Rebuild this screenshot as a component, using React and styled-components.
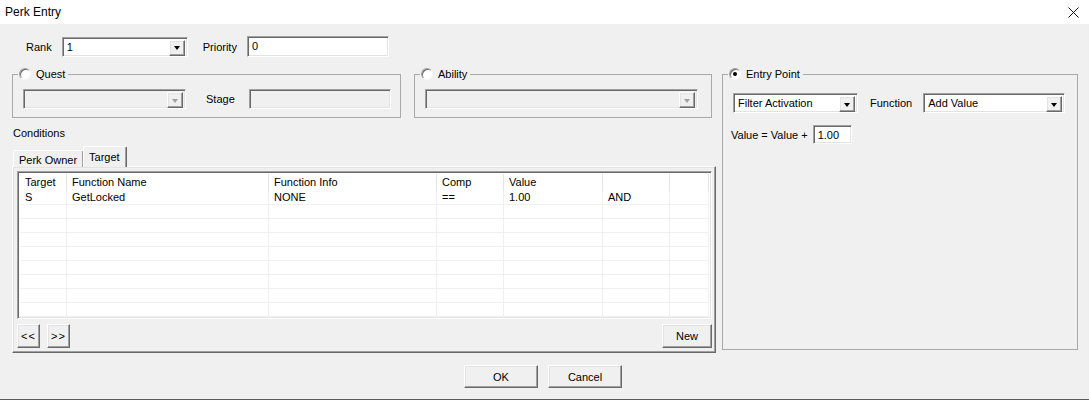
import React from "react"
import styled, { createGlobalStyle, css } from "styled-components"

const GlobalStyle = createGlobalStyle`
  html, body {
    margin: 0;
    padding: 0;
    background: #f0f0f0;
  }
  body {
    font-family: "Liberation Sans", Arial, sans-serif;
    font-size: 11px;
    color: #000;
  }
  * {
    box-sizing: border-box;
  }
`

const sunken = css`
  border: 1px solid;
  border-color: #a0a0a0 #fff #fff #a0a0a0;
  box-shadow: inset 1px 1px 0 #696969, inset -1px -1px 0 #e3e3e3;
`

const raised = css`
  border: 1px solid;
  border-color: #fff #696969 #696969 #fff;
  box-shadow: inset -1px -1px 0 #a0a0a0, inset 1px 1px 0 #e3e3e3;
`

const Window = styled.div`
  width: 1089px;
  height: 400px;
  display: flex;
  flex-direction: column;
  background: #f0f0f0;
  border-bottom: 1px solid #5a5a5a;
`

const TitleBar = styled.div`
  height: 24px;
  flex: none;
  background: #fff;
  display: flex;
  align-items: center;
  justify-content: space-between;
  padding: 0 10px 0 5px;
  font-size: 12px;
`

const Body = styled.div`
  display: grid;
  grid-template-columns: 704px 356px;
  column-gap: 6px;
  row-gap: 10px;
  padding: 12px 0 0 12px;
`

const Row = styled.div`
  display: flex;
  align-items: center;
  padding-left: ${(p) => p.$pl || 0}px;
  margin-top: ${(p) => p.$mt || 0}px;
`

const LeftCol = styled.div`
  display: flex;
  flex-direction: column;
`

const Label = styled.span`
  margin-left: ${(p) => p.$ml || 0}px;
  margin-right: ${(p) => p.$mr || 0}px;
  white-space: nowrap;
`

const Combo = styled.div`
  ${sunken};
  width: ${(p) => p.$w}px;
  height: 20px;
  display: flex;
  padding: 2px;
  background: ${(p) => (p.$disabled ? "#f0f0f0" : "#fff")};
`

const ComboText = styled.div`
  flex: 1;
  line-height: 15px;
  padding-left: 2px;
`

const ComboButton = styled.div`
  ${raised};
  width: 16px;
  height: 16px;
  background: #f0f0f0;
  display: flex;
  align-items: center;
  justify-content: center;

  &::after {
    content: "";
    border-left: 3.5px solid transparent;
    border-right: 3.5px solid transparent;
    border-top: 4px solid ${(p) => (p.$disabled ? "#a0a0a0" : "#000")};
    margin-top: 1px;
  }
`

const Edit = styled.div`
  ${sunken};
  width: ${(p) => p.$w}px;
  height: ${(p) => p.$h || 21}px;
  background: ${(p) => (p.$disabled ? "#f0f0f0" : "#fff")};
  padding: 2px 0 0 4px;
  line-height: 14px;
`

const GroupsRow = styled.div`
  display: flex;
  gap: 13px;
`

const Group = styled.fieldset`
  margin: 0;
  min-width: 0;
  width: ${(p) => p.$w}px;
  height: ${(p) => (p.$h ? `${p.$h}px` : "auto")};
  border: 1px solid #a9a9a9;
  padding: ${(p) => p.$pt || 8}px 10px 8px 10px;
  display: flex;
  flex-direction: column;
  align-items: flex-start;
`

const Legend = styled.legend`
  display: flex;
  align-items: center;
  gap: 5px;
  height: 14px;
  line-height: 14px;
  padding: 0 3px 0 1px;
  margin-left: -5px;
`

const Radio = styled.span`
  width: 12px;
  height: 12px;
  border-radius: 50%;
  border: 1px solid;
  border-color: #a0a0a0 #f8f8f8 #f8f8f8 #a0a0a0;
  box-shadow: inset 1px 1px 0 #696969;
  background: #fff;
  display: flex;
  align-items: center;
  justify-content: center;

  &::after {
    content: "";
    display: ${(p) => (p.$checked ? "block" : "none")};
    width: 4px;
    height: 4px;
    border-radius: 50%;
    background: #000;
  }
`

const Conditions = styled.div`
  margin: 9px 0 0 1px;
  line-height: 13px;
`

const TabStrip = styled.div`
  display: flex;
  align-items: flex-end;
  height: 21px;
  margin-top: 6px;
  margin-bottom: -1px;
  padding-left: 1px;
  position: relative;
  z-index: 1;
`

const Tab = styled.div`
  height: ${(p) => (p.$active ? 21 : 17)}px;
  padding: ${(p) => (p.$active ? "3px 6px 0 5px" : "2px 6px 0 5px")};
  border-top: 1px solid #fff;
  border-left: 1px solid #fff;
  border-right: 1px solid #696969;
  box-shadow: inset -1px 0 0 #a0a0a0;
  border-radius: 2px 2px 0 0;
  background: #f0f0f0;
  line-height: 14px;
  margin-left: ${(p) => (p.$active ? -1 : 0)}px;
`

const Panel = styled.div`
  ${raised};
  height: 187px;
  padding: 4px 3px 3px 4px;
  display: flex;
  flex-direction: column;
`

const ListView = styled.div`
  ${sunken};
  height: 148px;
  padding: 2px;
  background: #fff;
  overflow: hidden;
`

const Grid = styled.div`
  display: grid;
  grid-template-columns: 47px 202px 168px 67px 99px 67px 1fr;
`

const HeadCell = styled.div`
  height: 17px;
  line-height: 17px;
  padding-left: 5px;
  border-right: 1px solid #e5e5e5;
  white-space: nowrap;
`

const Cell = styled.div`
  height: 14px;
  line-height: 13px;
  padding-left: 5px;
  border-right: 1px solid #f0f0f0;
  border-bottom: 1px solid #f0f0f0;
  white-space: nowrap;
`

const ListButtons = styled.div`
  display: flex;
  align-items: center;
  gap: 7px;
  margin-top: 5px;
`

const Button = styled.button`
  ${raised};
  width: ${(p) => p.$w}px;
  height: ${(p) => p.$h || 23}px;
  background: #f0f0f0;
  font-family: "Liberation Sans", Arial, sans-serif;
  font-size: ${(p) => p.$fs || 11}px;
  color: #000;
  padding: 0;
  margin-left: ${(p) => (p.$push ? "auto" : "0")};
  letter-spacing: ${(p) => p.$ls || 0}px;
`

const Footer = styled.div`
  display: flex;
  justify-content: center;
  gap: 10px;
  padding: 12px 3px 0 0;
`

const headers = ["Target", "Function Name", "Function Info", "Comp", "Value", "", ""]
const rows = [
  ["S", "GetLocked", "NONE", "==", "1.00", "AND", ""],
  ...Array.from({ length: 9 }, () => ["", "", "", "", "", "", ""]),
]

const CloseIcon = () => (
  <svg width="11" height="11" viewBox="0 0 11 11">
    <path d="M0.5 0.5 L10.5 10.5 M10.5 0.5 L0.5 10.5" stroke="#111" strokeWidth="1" />
  </svg>
)

const ComboBox = ({ w, text, disabled }) => (
  <Combo $w={w} $disabled={disabled}>
    <ComboText>{text}</ComboText>
    <ComboButton $disabled={disabled} />
  </Combo>
)

export default function App() {
  return (
    <>
      <GlobalStyle />
      <Window>
        <TitleBar>
          <span>Perk Entry</span>
          <CloseIcon />
        </TitleBar>
        <Body>
          <Row $pl={14}>
            <Label $mr={10}>Rank</Label>
            <ComboBox w={126} text="1" />
            <Label $ml={15} $mr={10}>Priority</Label>
            <Edit $w={142}>0</Edit>
          </Row>
          <div />

          <LeftCol>
            <GroupsRow>
              <Group $w={389}>
                <Legend>
                  <Radio />
                  Quest
                </Legend>
                <Row>
                  <ComboBox w={163} disabled />
                  <Label $ml={20} $mr={14}>Stage</Label>
                  <Edit $w={142} $h={20} $disabled />
                </Row>
              </Group>
              <Group $w={298}>
                <Legend>
                  <Radio />
                  Ability
                </Legend>
                <ComboBox w={273} disabled />
              </Group>
            </GroupsRow>

            <Conditions>Conditions</Conditions>
            <TabStrip>
              <Tab>Perk Owner</Tab>
              <Tab $active>Target</Tab>
            </TabStrip>
            <Panel>
              <ListView>
                <Grid>
                  {headers.map((h, i) => (
                    <HeadCell key={i}>{h}</HeadCell>
                  ))}
                  {rows.map((r, ri) =>
                    r.map((c, ci) => <Cell key={`${ri}-${ci}`}>{c}</Cell>)
                  )}
                </Grid>
              </ListView>
              <ListButtons>
                <Button $w={23} $h={24} $ls={1}>&lt;&lt;</Button>
                <Button $w={23} $h={24} $ls={1}>&gt;&gt;</Button>
                <Button $w={50} $h={24} $push>New</Button>
              </ListButtons>
            </Panel>
          </LeftCol>

          <Group $w={356} $h={283} $pt={12}>
            <Legend>
              <Radio $checked />
              Entry Point
            </Legend>
            <Row>
              <ComboBox w={125} text="Filter Activation" />
              <Label $ml={12} $mr={11}>Function</Label>
              <ComboBox w={142} text="Add Value" />
            </Row>
            <Row $mt={12}>
              <Label $ml={-2} $mr={5}>Value = Value +</Label>
              <Edit $w={39} $h={19}>1.00</Edit>
            </Row>
          </Group>
        </Body>
        <Footer>
          <Button $w={74}>OK</Button>
          <Button $w={74}>Cancel</Button>
        </Footer>
      </Window>
    </>
  )
}
